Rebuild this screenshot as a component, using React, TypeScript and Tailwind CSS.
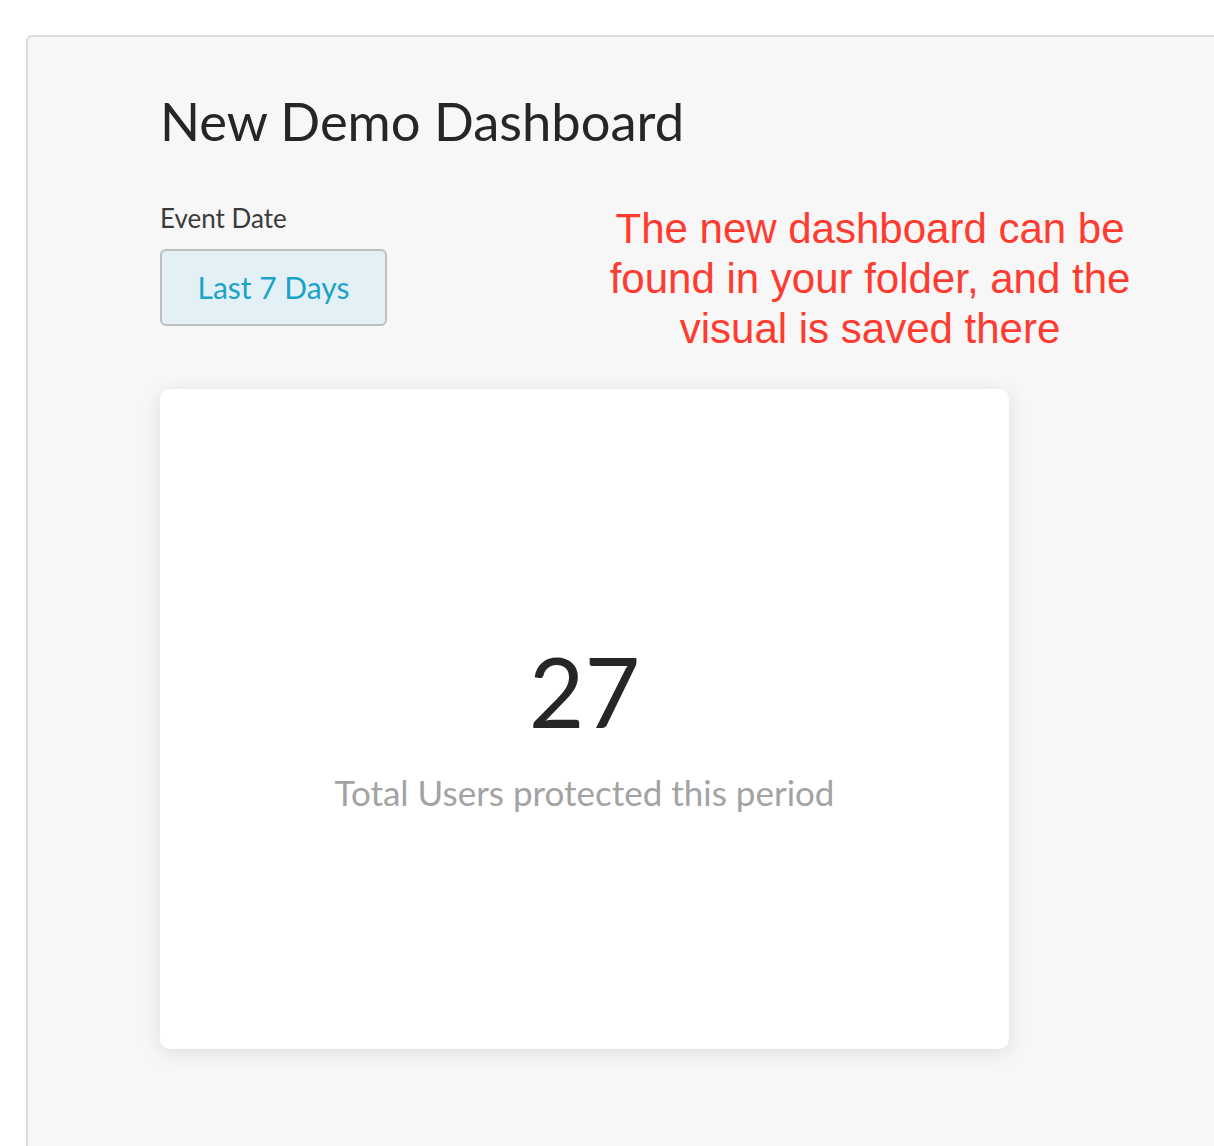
import React from 'react';

export default function App() {
  return (
    <div className="min-h-[1146px] bg-white pt-[35px] pl-[26px] overflow-hidden">
      <div className="min-h-[1111px] bg-[#f7f7f7] border-t-2 border-l-2 border-[#dcdcdc] rounded-tl-[6px] pl-[132px] pt-[56px] font-['Lato',sans-serif]">
        {/* Title */}
        <h1 className="text-[52.5px] leading-[56px] text-[#262626] font-normal">New Demo Dashboard</h1>

        {/* Filter row + annotation */}
        <div className="flex items-start mt-[55px]">
          <div className="w-[227px] shrink-0">
            <div className="text-[26px] leading-[28px] text-[#3a3a3a]">Event Date</div>
            <button className="mt-[17px] w-[227px] h-[77px] rounded-[6px] border-2 border-[#bfbfbf] bg-[#e3f1f6] text-[30px] text-[#1ba3c9]">
              Last 7 Days
            </button>
          </div>
          <p className="ml-[213px] w-[540px] text-center text-[42px] leading-[50px] text-[#ff3b30] font-['Liberation_Sans',Arial,sans-serif]">
            The new dashboard can be found in your folder, and the visual is saved there
          </p>
        </div>

        {/* Metric card */}
        <div className="mt-[35px] w-[849px] h-[660px] bg-white rounded-[10px] shadow-[0_4px_20px_rgba(0,0,0,0.1)] pt-[254px] flex flex-col items-center">
          <div className="text-[96px] leading-[96px] text-[#262626]">27</div>
          <div className="mt-[36px] text-[35px] leading-[35px] text-[#a3a3a3]">Total Users protected this period</div>
        </div>
      </div>
    </div>
  );
}
